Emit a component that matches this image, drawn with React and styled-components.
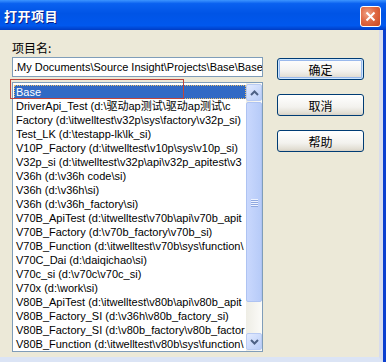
import React from "react";
import styled, { createGlobalStyle } from "styled-components";

const GlobalStyle = createGlobalStyle`
  html, body {
    margin: 0;
    padding: 0;
    background: #ece9d8;
  }
  body {
    font-family: "Liberation Sans", "Noto Sans CJK SC", sans-serif;
  }
`;

const Window = styled.div`
  width: 386px;
  height: 362px;
  display: flex;
  flex-direction: column;
  overflow: hidden;
`;

const TitleBar = styled.div`
  height: 30px;
  flex-shrink: 0;
  display: flex;
  align-items: center;
  justify-content: space-between;
  padding: 0 4px 0 4px;
  background: linear-gradient(
    #3d95ff 0%,
    #0a61f0 12%,
    #0054e6 45%,
    #0058ee 85%,
    #0048d6 94%,
    #003cc4 100%
  );
`;

const TitleText = styled.span`
  font-family: "Noto Sans CJK SC", sans-serif;
  font-weight: 700;
  font-size: 13px;
  color: #fff;
  letter-spacing: 0.5px;
  text-shadow: 1px 1px 0 #0a1f8a;
  padding-top: 1px;
`;

const CloseButton = styled.div`
  width: 19px;
  height: 19px;
  margin-right: 1px;
  margin-top: 2px;
  border: 1px solid #fff;
  border-radius: 3px;
  background: radial-gradient(circle at 35% 35%, #f0a488 0%, #e06a44 45%, #c9461e 100%);
  display: flex;
  align-items: center;
  justify-content: center;
`;

const Frame = styled.div`
  flex: 1;
  display: flex;
  border-right: 3px solid #0b3fd0;
`;

const Body = styled.div`
  flex: 1;
  display: flex;
  padding: 9px 0 0 12px;
  border-right: 4px solid #d8dced;
  border-bottom: 5px solid #dbe4f5;
`;

const LeftColumn = styled.div`
  width: 251px;
  display: flex;
  flex-direction: column;
`;

const Label = styled.div`
  font-family: "Noto Sans CJK SC", sans-serif;
  font-size: 12px;
  line-height: 18px;
  height: 18px;
  color: #000;
`;

const TextInput = styled.div`
  height: 18px;
  border: 1px solid #7f9db9;
  background: #fff;
  font-size: 11px;
  line-height: 18px;
  padding-left: 1px;
  white-space: nowrap;
  overflow: hidden;
  color: #000;
`;

const ListBox = styled.div`
  margin-top: 5px;
  height: 268px;
  border: 1px solid #7f9db9;
  background: #fff;
  display: flex;
  position: relative;
`;

const Rows = styled.div`
  flex: 1;
  min-width: 0;
  padding: 2px 0 0 1px;
  overflow: hidden;
`;

const Row = styled.div`
  height: 14px;
  line-height: 14px;
  font-size: 11px;
  white-space: nowrap;
  overflow: hidden;
  padding-left: 2px;
  color: ${(p) => (p.$selected ? "#fff" : "#000")};
  background: ${(p) => (p.$selected ? "#316ac5" : "transparent")};
  outline: ${(p) => (p.$selected ? "1px dotted #e8c070" : "none")};
  outline-offset: -1px;
`;

const ScrollBar = styled.div`
  width: 16px;
  flex-shrink: 0;
  display: flex;
  flex-direction: column;
  padding: 1px 0;
  background: linear-gradient(90deg, #eeede5, #fbfbf8);
`;

const ArrowButton = styled.div`
  height: 15px;
  border: 1px solid #b9cbf3;
  border-radius: 2px;
  background: linear-gradient(135deg, #e3ebff, #b9cdf8);
  display: flex;
  align-items: center;
  justify-content: center;
`;

const Track = styled.div`
  flex: 1;
  padding: 1px 0;
  display: flex;
  flex-direction: column;
`;

const Thumb = styled.div`
  height: 198px;
  border: 1px solid #aec3f2;
  border-radius: 2px;
  background: linear-gradient(90deg, #c9d8fd, #b7cbf8);
  display: flex;
  flex-direction: column;
  align-items: center;
  justify-content: center;
  gap: 1px;
`;

const Grip = styled.div`
  width: 7px;
  height: 1px;
  background: #eef3ff;
  box-shadow: 0 1px 0 #8fa8e0;
`;

const Annotation = styled.div`
  position: absolute;
  left: -3px;
  top: -4px;
  width: 172px;
  height: 18px;
  border: 1px solid #c0463c;
  pointer-events: none;
`;

const RightColumn = styled.div`
  margin-left: 14px;
  padding-top: 19px;
  display: flex;
  flex-direction: column;
  gap: 14px;
`;

const Button = styled.div`
  width: 85px;
  height: 20px;
  border: 1px solid #003c74;
  border-radius: 3px;
  background: linear-gradient(#ffffff 0%, #f3f2ee 60%, #e2ded3 90%, #d6d0c5 100%);
  box-shadow: ${(p) =>
    p.$default ? "inset 0 0 0 1px #cee7ff, inset 0 0 0 2px #9ab9ec" : "none"};
  display: flex;
  align-items: center;
  justify-content: center;
  font-family: "Noto Sans CJK SC", sans-serif;
  font-size: 12px;
  color: #000;
`;

const items = [
  "Base",
  "DriverApi_Test (d:\\驱动ap测试\\驱动ap测试\\c",
  "Factory (d:\\itwelltest\\v32p\\sys\\factory\\v32p_si)",
  "Test_LK (d:\\testapp-lk\\lk_si)",
  "V10P_Factory (d:\\itwelltest\\v10p\\sys\\v10p_si)",
  "V32p_si (d:\\itwelltest\\v32p\\api\\v32p_apitest\\v3",
  "V36h (d:\\v36h code\\si)",
  "V36h (d:\\v36h\\si)",
  "V36h (d:\\v36h_factory\\si)",
  "V70B_ApiTest (d:\\itwelltest\\v70b\\api\\v70b_apit",
  "V70B_Factory (d:\\v70b_factory\\v70b_si)",
  "V70B_Function (d:\\itwelltest\\v70b\\sys\\function\\",
  "V70C_Dai (d:\\daiqichao\\si)",
  "V70c_si (d:\\v70c\\v70c_si)",
  "V70x (d:\\work\\si)",
  "V80B_ApiTest (d:\\itwelltest\\v80b\\api\\v80b_apit",
  "V80B_Factory_SI (d:\\v36h\\v80b_factory_si)",
  "V80B_Factory_SI (d:\\v80b_factory\\v80b_factor",
  "V80B_Function (d:\\itwelltest\\v80b\\sys\\function\\",
];

const Chevron = ({ up }) => (
  <svg width="9" height="6" viewBox="0 0 9 6">
    <path
      d={up ? "M1 5 L4.5 1.5 L8 5" : "M1 1 L4.5 4.5 L8 1"}
      fill="none"
      stroke="#4d6185"
      strokeWidth="2"
    />
  </svg>
);

export default function App() {
  return (
    <>
      <GlobalStyle />
      <Window>
        <TitleBar>
          <TitleText>打开项目</TitleText>
          <CloseButton>
            <svg width="11" height="11" viewBox="0 0 11 11">
              <path d="M1.5 1.5 L9.5 9.5 M9.5 1.5 L1.5 9.5" stroke="#fff" strokeWidth="2" />
            </svg>
          </CloseButton>
        </TitleBar>
        <Frame>
          <Body>
            <LeftColumn>
              <Label>项目名:</Label>
              <TextInput>.My Documents\Source Insight\Projects\Base\Base</TextInput>
              <ListBox>
                <Rows>
                  {items.map((item, i) => (
                    <Row key={i} $selected={i === 0}>
                      {item}
                    </Row>
                  ))}
                </Rows>
                <ScrollBar>
                  <ArrowButton>
                    <Chevron up />
                  </ArrowButton>
                  <Track>
                    <Thumb>
                      <Grip />
                      <Grip />
                      <Grip />
                      <Grip />
                    </Thumb>
                  </Track>
                  <ArrowButton>
                    <Chevron />
                  </ArrowButton>
                </ScrollBar>
                <Annotation />
              </ListBox>
            </LeftColumn>
            <RightColumn>
              <Button $default>确定</Button>
              <Button>取消</Button>
              <Button>帮助</Button>
            </RightColumn>
          </Body>
        </Frame>
      </Window>
    </>
  );
}
